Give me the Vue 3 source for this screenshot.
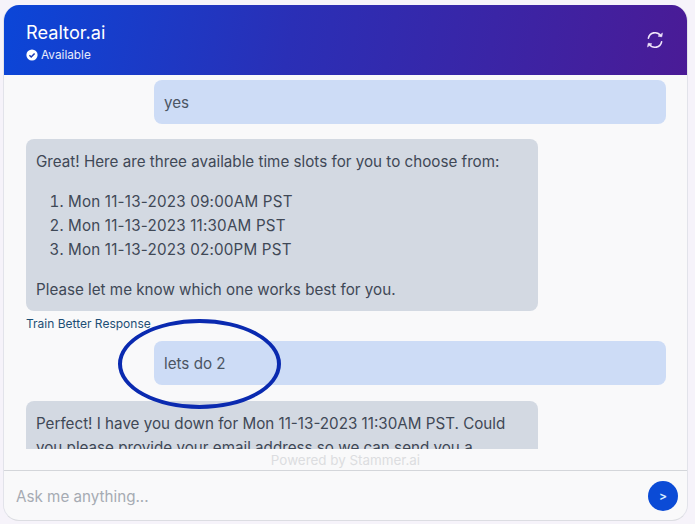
<template>
  <div class="page">
    <div class="widget">
      <header class="head">
        <div>
          <div class="title">Realtor.ai</div>
          <div class="status">
            <svg width="12" height="12" viewBox="0 0 12 12">
              <circle cx="6" cy="6" r="5.6" fill="#fff" />
              <path d="M3.4 6.2l1.8 1.8 3.4-3.6" fill="none" stroke="#1d3bb5" stroke-width="1.5" />
            </svg>
            <span>Available</span>
          </div>
        </div>
        <svg class="refresh" width="20" height="20" viewBox="0 0 20 20" fill="none" stroke="#f0e6fa" stroke-width="1.6" stroke-linecap="round">
          <path d="M3.4 8.2A6.8 6.8 0 0 1 15.6 5.6" />
          <path d="M16.6 11.8A6.8 6.8 0 0 1 4.4 14.4" />
          <path d="M17.4 3.4l-.6 3.4-3.4-.6z" fill="#f0e6fa" stroke-width="0.6" />
          <path d="M2.6 16.6l.6-3.4 3.4.6z" fill="#f0e6fa" stroke-width="0.6" />
        </svg>
      </header>

      <div class="messages">
        <div class="bubble user">yes</div>
        <div class="bubble bot">
          <p>Great! Here are three available time slots for you to choose from:</p>
          <ol>
            <li v-for="slot in slots" :key="slot">{{ slot }}</li>
          </ol>
          <p>Please let me know which one works best for you.</p>
        </div>
        <a class="train">Train Better Response</a>
        <div class="bubble user second">lets do 2</div>
        <div class="bubble bot last">
          <p>Perfect! I have you down for Mon 11-13-2023 11:30AM PST. Could you please provide your email address so we can send you a confirmation?</p>
        </div>
      </div>

      <div class="powered">Powered by Stammer.ai</div>

      <footer class="foot">
        <span class="placeholder">Ask me anything...</span>
        <button class="send">&gt;</button>
      </footer>
    </div>

    <div class="circle"></div>
  </div>
</template>

<script setup>
const slots = [
  'Mon 11-13-2023 09:00AM PST',
  'Mon 11-13-2023 11:30AM PST',
  'Mon 11-13-2023 02:00PM PST'
]
</script>

<style>
html,
body {
  margin: 0;
  background: #f6f3fa;
}
</style>

<style scoped>
.page {
  position: relative;
  width: 695px;
  height: 524px;
  padding: 5px 7px 3px 3px;
  box-sizing: border-box;
  overflow: hidden;
  font-family: Inter, "Liberation Sans", sans-serif;
  color: #4b5563;
}

.widget {
  height: 100%;
  display: flex;
  flex-direction: column;
  background: #f9f9fa;
  border-radius: 16px;
  border-right: 1px solid #e2e3ea;
  border-left: 1px solid #e2e3ea;
  border-bottom: 1px solid #dcdde2;
  box-sizing: border-box;
  overflow: hidden;
}

.head {
  height: 70px;
  flex: none;
  display: flex;
  align-items: center;
  justify-content: space-between;
  padding: 0 22px 0 22px;
  background: linear-gradient(100deg, #0b46d8 0%, #2a2fb6 42%, #4a1b96 100%);
  color: #fff;
}

.title {
  padding-top: 1px;
  font-size: 18.2px;
  line-height: 24px;
  font-weight: 400;
}

.status {
  display: flex;
  align-items: center;
  gap: 3px;
  margin-top: 4px;
  font-size: 11.8px;
  line-height: 14px;
  color: #e8ecfb;
}

.refresh {
  display: block;
}

.messages {
  height: 374px;
  flex: none;
  overflow: hidden;
  padding: 5px 21px 0 22px;
  box-sizing: border-box;
  display: flex;
  flex-direction: column;
  align-items: flex-start;
  font-size: 15.2px;
  line-height: 24px;
}

.bubble {
  flex: none;
  border-radius: 8px;
  box-sizing: border-box;
  padding: 11px 10px 9px;
}

.user {
  align-self: flex-end;
  width: 512px;
  height: 44px;
  background: #cddcf6;
}

.bot {
  width: 512px;
  margin-top: 15px;
  background: #d3d9e2;
  color: #3f4856;
}

.bot p {
  margin: 0;
}

.bot ol {
  margin: 16px 0;
  padding-left: 32px;
  letter-spacing: 0.2px;
}

.train {
  margin-top: 5px;
  font-size: 12px;
  line-height: 16px;
  color: #1d4e75;
}

.second {
  margin-top: 9px;
}

.last {
  margin-top: 16px;
}

.powered {
  height: 21px;
  flex: none;
  padding-top: 1px;
  box-sizing: border-box;
  text-align: center;
  font-size: 13.4px;
  line-height: 20px;
  color: #dcdde0;
}

.foot {
  flex: 1;
  display: flex;
  align-items: center;
  justify-content: space-between;
  padding: 0 9px 0 12px;
  border-top: 1px solid #d4d6da;
}

.placeholder {
  padding-top: 1px;
  font-size: 15.2px;
  color: #a6abb3;
}

.send {
  width: 30px;
  height: 30px;
  padding: 0;
  border: none;
  border-radius: 50%;
  background: #0b4bd6;
  color: #d8ecff;
  font-family: inherit;
  font-size: 12px;
  font-weight: 600;
}

/* hand drawn annotation over the chat */
.circle {
  position: absolute;
  left: 118px;
  top: 319px;
  width: 163px;
  height: 90px;
  box-sizing: border-box;
  border: 4px solid #0a2ab0;
  border-radius: 50%;
}
</style>
